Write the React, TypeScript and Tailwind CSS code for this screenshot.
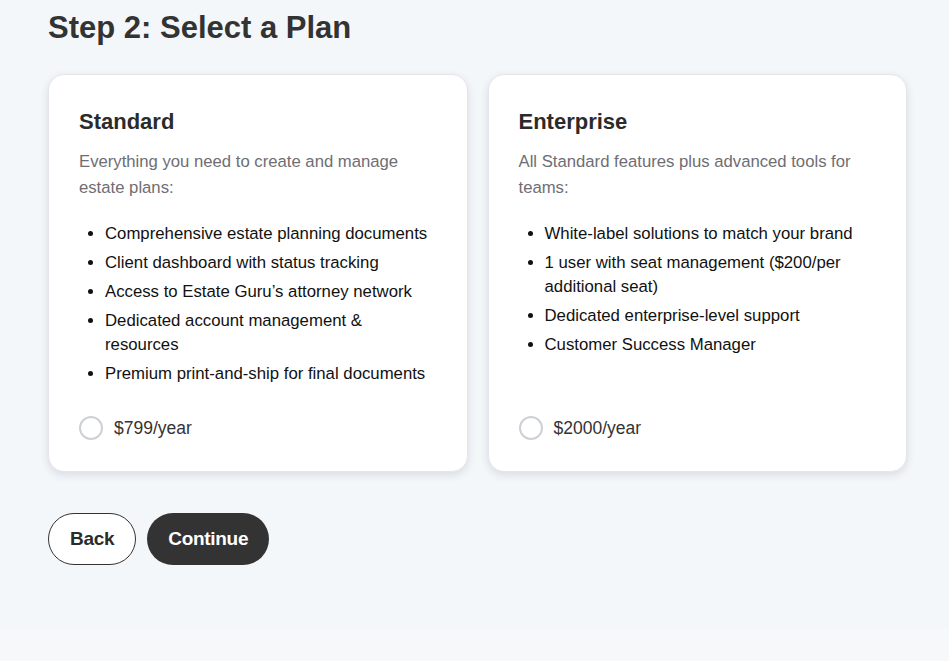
import React, { useState } from 'react';

type Plan = {
  id: string;
  name: string;
  blurb: string;
  features: string[];
  price: string;
};

const plans: Plan[] = [
  {
    id: 'standard',
    name: 'Standard',
    blurb: 'Everything you need to create and manage estate plans:',
    features: [
      'Comprehensive estate planning documents',
      'Client dashboard with status tracking',
      'Access to Estate Guru’s attorney network',
      'Dedicated account management & resources',
      'Premium print-and-ship for final documents',
    ],
    price: '$799/year',
  },
  {
    id: 'enterprise',
    name: 'Enterprise',
    blurb: 'All Standard features plus advanced tools for teams:',
    features: [
      'White-label solutions to match your brand',
      '1 user with seat management ($200/per additional seat)',
      'Dedicated enterprise-level support',
      'Customer Success Manager',
    ],
    price: '$2000/year',
  },
];

const App: React.FC = () => {
  const [selected, setSelected] = useState<string | null>(null);

  return (
    <div className="min-h-[661px] bg-[#f7f8fa] font-['Liberation_Sans',Arial,sans-serif]">
      <div className="bg-[#f4f7fa] px-12 pt-[9px] pb-[64px]">
        <h2 className="text-[31px] leading-[37px] font-bold text-[#333333]">
          Step 2: Select a Plan
        </h2>

        <div className="mt-[28px] grid grid-cols-2 gap-5 w-[859px]">
          {plans.map((plan) => (
            <div
              key={plan.id}
              className="flex flex-col bg-white rounded-2xl border border-[#e3e7ec] shadow-[0_3px_8px_rgba(15,23,42,0.12)] px-[30px] pt-[33px] pb-[31px]"
            >
              <h3 className="text-[22px] leading-[28px] font-bold text-[#2b2b2b]">{plan.name}</h3>
              <p className="mt-[13px] text-[16.7px] leading-[26px] text-[#6e6e73]">{plan.blurb}</p>
              <ul className="mt-[21px] list-disc pl-[26px] space-y-[5px] text-[16.75px] leading-[24px] text-[#111111]">
                {plan.features.map((f) => (
                  <li key={f}>{f}</li>
                ))}
              </ul>
              <label
                className="mt-auto pt-[30px] flex items-center gap-[11px] cursor-pointer"
                onClick={() => setSelected(plan.id)}
              >
                <span
                  className={`w-6 h-6 rounded-full border-2 ${
                    selected === plan.id ? 'border-[#333333] bg-[#333333]' : 'border-[#cdd1d6] bg-white'
                  }`}
                />
                <span className="text-[17.5px] leading-[24px] text-[#333333]">{plan.price}</span>
              </label>
            </div>
          ))}
        </div>

        <div className="mt-[41px] flex gap-[11px]">
          <button className="h-[52px] px-[21px] rounded-full border border-[#333333] bg-white text-[19px] font-bold text-[#2b2b2b] tracking-[-0.3px]">
            Back
          </button>
          <button className="h-[52px] px-[21px] rounded-full bg-[#333333] text-[19px] font-bold text-white tracking-[-0.3px]">
            Continue
          </button>
        </div>
      </div>
    </div>
  );
};

export default App;
